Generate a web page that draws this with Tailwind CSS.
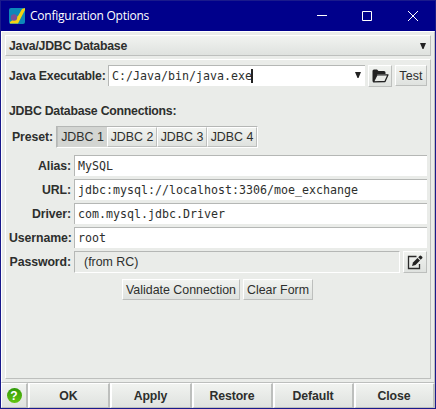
<!DOCTYPE html>
<html lang="en">
<head>
<meta charset="utf-8">
<title>Configuration Options</title>
<script src="https://cdn.jsdelivr.net/npm/@tailwindcss/browser@4"></script>
</head>
<body class="h-[409px] w-[436px] overflow-hidden bg-[#00008b] font-['Liberation_Sans',sans-serif] text-[12px] leading-[16px] text-[#2d2f2d]">
<div class="flex h-[409px] w-[436px] flex-col border border-[#1a1a8c]">
  <header class="flex h-[30px] shrink-0 items-center bg-[#00008b] pl-2 text-white">
    <svg class="h-4 w-4" viewBox="0 0 16 16"><rect width="16" height="16" rx="2" fill="#0d87b9"/><path d="M1 15.500V14L9 8L13 1L16 0V2L9 15.500z" fill="#f5d311"/><circle cx="5" cy="9.500" r="3.200" fill="#7a5195"/></svg>
    <h1 class="ml-[5px] font-['Open_Sans',sans-serif] text-[12px] tracking-[-0.23px] whitespace-nowrap">Configuration Options</h1>
    <div class="ml-auto flex items-center pr-[17px]">
      <svg class="h-[10px] w-[10px]" viewBox="0 0 10 10"><path d="M0 4.500h10" stroke="white"/></svg>
      <svg class="ml-[35px] h-[10px] w-[10px]" viewBox="0 0 10 10"><path d="M.5.500h9v9h-9z" stroke="white" fill="none"/></svg>
      <svg class="ml-[36px] h-[10px] w-[10px]" viewBox="0 0 10 10"><path d="M0 0l10 10M10 0L0 10" stroke="white" fill="none"/></svg>
    </div>
  </header>
  <main class="flex h-[352px] shrink-0 flex-col border-t border-r border-b border-l border-t-white border-r-[#bdbfbd] border-b-[#bdbfbd] border-l-white bg-[#eaece9] px-[3px] pt-[3px]">
    <div class="flex h-[21px] shrink-0 items-center justify-between border-t border-r border-b border-l border-t-white border-r-[#bdbfbd] border-b-[#bdbfbd] border-l-white bg-linear-to-b from-[#f1f3f0] to-[#dfe2df] pr-[4px] pl-[3px] font-bold">
      <span class="text-[12.300px] tracking-[-0.24px]">Java/JDBC Database</span>
      <svg class="mt-px h-[6px] w-[6px]" viewBox="0 0 6 6"><path d="M0 0h6L3.500 6h-1z" fill="#222"/></svg>
    </div>
    <section class="mt-[3px] flex h-[320px] shrink-0 flex-col border-t border-r border-b border-l border-t-white border-r-[#bdbfbd] border-b-[#bdbfbd] border-l-white pr-[3px] pl-[3px]">
      <div class="mt-[5px] flex h-[22px] items-start">
        <label class="w-[99px] pt-[3px] text-[12.300px] font-bold tracking-[-0.2px] whitespace-nowrap">Java Executable:</label>
        <div class="flex h-[21px] w-[257px] items-center border-t border-l border-[#b5b7b5] bg-white pr-[4px] pl-[3px] font-['DejaVu_Sans_Mono',monospace] text-[11.630px]">
          <span>C:/Java/bin/java.exe</span><i class="-ml-px h-[14px] w-[2px] bg-[#222]"></i>
          <svg class="mb-[2px] ml-auto h-[6px] w-[6px]" viewBox="0 0 6 6"><path d="M0 0h6L3.500 6h-1z" fill="#222"/></svg>
        </div>
        <button class="ml-[3px] flex h-[22px] w-[24px] items-center justify-center border-t border-r border-b border-l border-t-white border-r-[#bdbfbd] border-b-[#bdbfbd] border-l-white bg-linear-to-b from-[#f1f3f0] to-[#dfe2df]">
          <svg class="h-[14px] w-[17px]" viewBox="0 0 17 14"><path d="M.5 12.500V2Q.5.500 2 .500H5L6.500 2H12Q13.500 2 13.500 3.500V5H5.500L2 12.500z" fill="#222"/><path d="M1.500 12.800L5 5.800H16L13 12.500z" fill="#e9ebe8" stroke="#222" stroke-width="1.300" stroke-linejoin="round"/></svg>
        </button>
        <button class="ml-[3px] flex h-[21px] w-[32px] items-center justify-center border-t border-r border-b border-l border-t-white border-r-[#bdbfbd] border-b-[#bdbfbd] border-l-white bg-linear-to-b from-[#f1f3f0] to-[#dfe2df] text-[12.400px] tracking-[0.200px]">Test</button>
      </div>
      <h2 class="mt-[16px] h-4 text-[12.300px] font-bold tracking-[-0.24px]">JDBC Database Connections:</h2>
      <div class="mt-[7px] flex h-[22px] items-center">
        <span class="w-[47px] pl-[3px] text-[12.300px] font-bold tracking-[-0.09px]">Preset:</span>
        <div class="flex h-[22px] w-[202px] border-t border-r border-b border-l border-t-[#b5b7b5] border-r-white border-b-white border-l-[#b5b7b5] text-[12.400px]">
          <button class="w-[50px] border-l border-[#bdbfbd] bg-[#d3d5d2]">JDBC 1</button>
          <button class="w-[50px] border-t border-r border-b border-l border-t-white border-r-[#bdbfbd] border-b-[#bdbfbd] border-l-white bg-linear-to-b from-[#f1f3f0] to-[#dfe2df]">JDBC 2</button>
          <button class="w-[50px] border-t border-r border-b border-l border-t-white border-r-[#bdbfbd] border-b-[#bdbfbd] border-l-white bg-linear-to-b from-[#f1f3f0] to-[#dfe2df]">JDBC 3</button>
          <button class="w-[50px] border-t border-r border-b border-l border-t-white border-r-[#bdbfbd] border-b-[#bdbfbd] border-l-white bg-linear-to-b from-[#f1f3f0] to-[#dfe2df]">JDBC 4</button>
        </div>
      </div>
      <div class="mt-[7px] grid auto-rows-[21px] grid-cols-[62px_353px] gap-x-[3px] gap-y-[3px]">
        <label class="pt-[3px] text-right text-[12.300px] font-bold tracking-[-0.09px]">Alias:</label>
        <div class="flex items-center border-t border-l border-[#b5b7b5] bg-white pl-[3px] font-['DejaVu_Sans_Mono',monospace] text-[11.630px]">MySQL</div>
        <label class="pt-[3px] text-right text-[12.300px] font-bold tracking-[-0.09px]">URL:</label>
        <div class="flex items-center border-t border-l border-[#b5b7b5] bg-white pl-[3px] font-['DejaVu_Sans_Mono',monospace] text-[11.630px]">jdbc:mysql://localhost:3306/moe_exchange</div>
        <label class="pt-[3px] text-right text-[12.300px] font-bold tracking-[-0.09px]">Driver:</label>
        <div class="flex items-center border-t border-l border-[#b5b7b5] bg-white pl-[3px] font-['DejaVu_Sans_Mono',monospace] text-[11.630px]">com.mysql.jdbc.Driver</div>
        <label class="pt-[3px] text-right text-[12.300px] font-bold tracking-[-0.09px]">Username:</label>
        <div class="flex items-center border-t border-l border-[#b5b7b5] bg-white pl-[3px] font-['DejaVu_Sans_Mono',monospace] text-[11.630px]">root</div>
        <label class="pt-[3px] text-right text-[12.300px] font-bold tracking-[-0.09px]">Password:</label>
        <div class="flex h-[22px]">
          <div class="flex h-[22px] w-[326px] items-center border-t border-r border-b border-l border-t-[#b5b7b5] border-r-white border-b-white border-l-[#b5b7b5] pl-[9px] text-[12.400px]">(from RC)</div>
          <button class="ml-[3px] flex h-[22px] w-[24px] items-center justify-center border-t border-r border-b border-l border-t-white border-r-[#bdbfbd] border-b-[#bdbfbd] border-l-white bg-linear-to-b from-[#f1f3f0] to-[#dfe2df]">
            <svg class="h-[15px] w-[16px]" viewBox="0 0 16 15"><path d="M9.500 1.500H1.500V13.500H12.500V9" fill="none" stroke="#2b2b2b" stroke-width="1.300"/><path d="M5 11L6 7.500L10.500 3L13 5.500L8.500 10z" fill="#222"/><path d="M11.200 2.300L12.800.8Q13.500.2 14.300.9L15.200 1.800Q15.900 2.500 15.200 3.200L13.700 4.800z" fill="#222"/></svg>
          </button>
        </div>
      </div>
      <div class="mt-[7px] flex h-[21px] justify-center gap-[3px] pr-px text-[12.400px]">
        <button class="w-[118px] border-t border-r border-b border-l border-t-white border-r-[#bdbfbd] border-b-[#bdbfbd] border-l-white bg-linear-to-b from-[#f1f3f0] to-[#dfe2df] whitespace-nowrap">Validate Connection</button>
        <button class="w-[70px] border-t border-r border-b border-l border-t-white border-r-[#bdbfbd] border-b-[#bdbfbd] border-l-white bg-linear-to-b from-[#f1f3f0] to-[#dfe2df] whitespace-nowrap">Clear Form</button>
      </div>
    </section>
  </main>
  <footer class="flex h-[25px] bg-[#eaece9] text-[12.300px] font-bold tracking-[-0.09px]">
    <button class="flex w-[27px] items-center justify-center border-t border-r-2 border-b border-l border-t-white border-r-[#bdbfbd] border-b-[#bdbfbd] border-l-white bg-linear-to-b from-[#f1f3f0] to-[#dfe2df]"><span class="flex h-[15px] w-[15px] items-center justify-center rounded-full bg-linear-to-b from-[#2f9a08] to-[#62c511] text-[12px] tracking-normal text-white">?</span></button>
    <button class="w-[82px] border-t border-r-2 border-b border-l-2 border-t-white border-r-[#bdbfbd] border-b-[#bdbfbd] border-l-white bg-linear-to-b from-[#f1f3f0] to-[#dfe2df] pr-px">OK</button>
    <button class="w-[82px] border-t border-r-2 border-b border-l-2 border-t-white border-r-[#bdbfbd] border-b-[#bdbfbd] border-l-white bg-linear-to-b from-[#f1f3f0] to-[#dfe2df] pr-px">Apply</button>
    <button class="w-[81px] border-t border-r-2 border-b border-l-2 border-t-white border-r-[#bdbfbd] border-b-[#bdbfbd] border-l-white bg-linear-to-b from-[#f1f3f0] to-[#dfe2df] pr-px">Restore</button>
    <button class="w-[81px] border-t border-r-2 border-b border-l-2 border-t-white border-r-[#bdbfbd] border-b-[#bdbfbd] border-l-white bg-linear-to-b from-[#f1f3f0] to-[#dfe2df] pr-px">Default</button>
    <button class="w-[81px] border-t border-r-2 border-b border-l-2 border-t-white border-r-[#bdbfbd] border-b-[#bdbfbd] border-l-white bg-linear-to-b from-[#f1f3f0] to-[#dfe2df] pr-px">Close</button>
  </footer>
</div>
</body>
</html>
